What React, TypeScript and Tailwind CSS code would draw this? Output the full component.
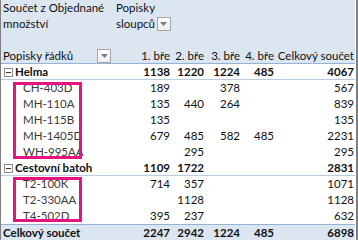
import React from "react";

type Row = {
    label: string;
    kind: "group" | "item" | "total";
    values: (string | null)[];
};

const rows: Row[] = [
    { label: "Helma", kind: "group", values: ["1138", "1220", "1224", "485", "4067"] },
    { label: "CH-403D", kind: "item", values: ["189", null, "378", null, "567"] },
    { label: "MH-110A", kind: "item", values: ["135", "440", "264", null, "839"] },
    { label: "MH-115B", kind: "item", values: ["135", null, null, null, "135"] },
    { label: "MH-1405D", kind: "item", values: ["679", "485", "582", "485", "2231"] },
    { label: "WH-995AA", kind: "item", values: [null, "295", null, null, "295"] },
    { label: "Cestovní batoh", kind: "group", values: ["1109", "1722", null, null, "2831"] },
    { label: "T2-100K", kind: "item", values: ["714", "357", null, null, "1071"] },
    { label: "T2-330AA", kind: "item", values: [null, "1128", null, null, "1128"] },
    { label: "T4-502D", kind: "item", values: ["395", "237", null, null, "632"] },
    { label: "Celkový součet", kind: "total", values: ["2247", "2942", "1224", "485", "6898"] },
];

const cols = "grid grid-cols-[113px_58px_34px_36px_34px_79px]";

function DropButton() {
    return (
        <span className="inline-flex h-[14px] w-[14px] shrink-0 items-center justify-center border border-[#a6a6a6] bg-gradient-to-b from-white to-[#eeeeee]">
            <svg width="7" height="4" viewBox="0 0 7 4">
                <path d="M0 0h7L3.5 4z" fill="#7a7a7a" />
            </svg>
        </span>
    );
}

function Collapse() {
    return (
        <span className="mr-[2px] inline-flex h-[9px] w-[9px] items-center justify-center border border-[#8c8c8c] bg-white">
            <span className="h-px w-[5px] bg-[#333]" />
        </span>
    );
}

export default function App() {
    return (
        <div
            className="relative flex h-[240px] w-[358px] overflow-hidden border-l border-r-2 border-[#7f7f7f] bg-white pr-px text-[11.5px] leading-4 text-[#111]"
            style={{ fontFamily: "Lato, 'Liberation Sans', sans-serif" }}
        >
            <div className="w-[354px]">
                {/* Header */}
                <div className="h-[64px] border-b border-[#95b3d7] bg-[#dce6f1]">
                    <div className={cols}>
                        <div className="h-4 whitespace-nowrap pl-[2px]">Součet z Objednané</div>
                        <div className="col-span-5 h-4 pl-[2px]">Popisky</div>
                        <div className="h-4 pl-[2px]">množství</div>
                        <div className="col-span-5 flex h-4 items-center gap-[2px] pl-[2px]">
                            <span>sloupců</span>
                            <DropButton />
                        </div>
                        <div className="col-span-6 h-4" />
                        <div className="flex h-[15px] items-center justify-between pl-[2px] pr-[3px]">
                            <span className="whitespace-nowrap">Popisky řádků</span>
                            <DropButton />
                        </div>
                        {["1. bře", "2. bře", "3. bře", "4. bře", "Celkový součet"].map((h, i) => (
                            <div
                                key={h}
                                className={`h-[15px] whitespace-nowrap text-right ${i === 4 ? "pr-px" : "pr-[2px]"}`}
                            >
                                {h}
                            </div>
                        ))}
                    </div>
                </div>

                {/* Body */}
                {rows.map((r) => (
                    <div
                        key={r.label}
                        className={`${cols} h-4 ${
                            r.kind === "group"
                                ? "border-b border-[#b8cce4] font-bold"
                                : r.kind === "total"
                                  ? "border-t border-[#95b3d7] bg-[#dce6f1] font-bold"
                                  : ""
                        }`}
                    >
                        <div
                            className={`flex items-center whitespace-nowrap ${
                                r.kind === "group" ? "pl-[3px]" : r.kind === "item" ? "pl-[22px] text-[#3a3a3a]" : "pl-[2px]"
                            }`}
                        >
                            {r.kind === "group" && <Collapse />}
                            {r.label}
                        </div>
                        {r.values.map((v, i) => (
                            <div key={i} className={`text-right ${i === 4 ? "pr-px" : "pr-[2px]"}`}>
                                {v}
                            </div>
                        ))}
                    </div>
                ))}
            </div>

            {/* Highlight boxes */}
            <div className="absolute left-[12px] top-[82px] h-[77px] w-[69px] border-[3px] border-[#e5157f]" />
            <div className="absolute left-[12px] top-[177px] h-[45px] w-[69px] border-[3px] border-[#e5157f]" />
        </div>
    );
}
